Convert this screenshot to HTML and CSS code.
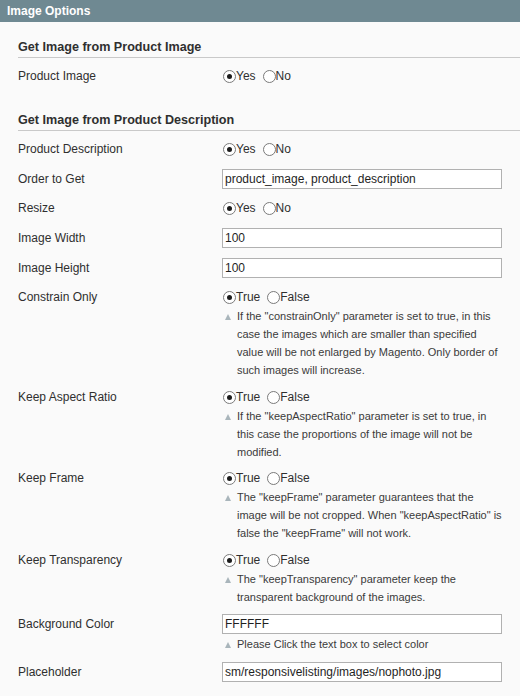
FILE: index.html
```html
<!DOCTYPE html>
<html>
<head>
<meta charset="utf-8">
<link rel="stylesheet" href="styles.css">
</head>
<body>
<div class="panel">
  <div class="panel-head">Image Options</div>
  <div class="panel-body">
    <h3 class="group-title first">Get Image from Product Image</h3>
    <div class="group">
      <div class="row">
        <div class="label">Product Image</div>
        <div class="value">
          <div class="radios">
            <label class="opt"><span class="radio checked"></span>Yes</label>
            <label class="opt"><span class="radio"></span>No</label>
          </div>
        </div>
      </div>
    </div>

    <h3 class="group-title">Get Image from Product Description</h3>
    <div class="group">
      <div class="row">
        <div class="label">Product Description</div>
        <div class="value">
          <div class="radios">
            <label class="opt"><span class="radio checked"></span>Yes</label>
            <label class="opt"><span class="radio"></span>No</label>
          </div>
        </div>
      </div>
      <div class="row input-row">
        <div class="label">Order to Get</div>
        <div class="value"><div class="text-input">product_image, product_description</div></div>
      </div>
      <div class="row">
        <div class="label">Resize</div>
        <div class="value">
          <div class="radios">
            <label class="opt"><span class="radio checked"></span>Yes</label>
            <label class="opt"><span class="radio"></span>No</label>
          </div>
        </div>
      </div>
      <div class="row input-row">
        <div class="label">Image Width</div>
        <div class="value"><div class="text-input">100</div></div>
      </div>
      <div class="row input-row">
        <div class="label">Image Height</div>
        <div class="value"><div class="text-input">100</div></div>
      </div>
      <div class="row has-note">
        <div class="label">Constrain Only</div>
        <div class="value">
          <div class="radios">
            <label class="opt"><span class="radio checked"></span>True</label>
            <label class="opt"><span class="radio"></span>False</label>
          </div>
          <p class="note">If the "constrainOnly" parameter is set to true, in this case the images which are smaller than specified value will be not enlarged by Magento. Only border of such images will increase.</p>
        </div>
      </div>
      <div class="row has-note">
        <div class="label">Keep Aspect Ratio</div>
        <div class="value">
          <div class="radios">
            <label class="opt"><span class="radio checked"></span>True</label>
            <label class="opt"><span class="radio"></span>False</label>
          </div>
          <p class="note">If the "keepAspectRatio" parameter is set to true, in this case the proportions of the image will not be modified.</p>
        </div>
      </div>
      <div class="row has-note">
        <div class="label">Keep Frame</div>
        <div class="value">
          <div class="radios">
            <label class="opt"><span class="radio checked"></span>True</label>
            <label class="opt"><span class="radio"></span>False</label>
          </div>
          <p class="note">The "keepFrame" parameter guarantees that the image will be not cropped. When "keepAspectRatio" is false the "keepFrame" will not work.</p>
        </div>
      </div>
      <div class="row has-note">
        <div class="label">Keep Transparency</div>
        <div class="value">
          <div class="radios">
            <label class="opt"><span class="radio checked"></span>True</label>
            <label class="opt"><span class="radio"></span>False</label>
          </div>
          <p class="note">The "keepTransparency" parameter keep the transparent background of the images.</p>
        </div>
      </div>
      <div class="row input-row has-note input-note">
        <div class="label">Background Color</div>
        <div class="value">
          <div class="text-input">FFFFFF</div>
          <p class="note">Please Click the text box to select color</p>
        </div>
      </div>
      <div class="row input-row">
        <div class="label">Placeholder</div>
        <div class="value"><div class="text-input">sm/responsivelisting/images/nophoto.jpg</div></div>
      </div>
    </div>
  </div>
</div>
</body>
</html>
```
FILE: styles.css
```css
html, body {
  margin: 0;
  padding: 0;
  background: #fafafa;
}
body {
  font-family: "Liberation Sans", Arial, sans-serif;
  font-size: 12px;
  color: #2f2f2f;
}
.panel-head {
  height: 22px;
  line-height: 22px;
  background: #6f8992;
  color: #ffffff;
  font-weight: bold;
  font-size: 12px;
  padding-left: 7px;
}
.panel-body {
  padding-left: 18px;
}
.group-title {
  margin: 20px 0 0 0;
  font-size: 12.6px;
  font-weight: bold;
  line-height: 18px;
  padding-bottom: 1px;
  border-bottom: 1px solid #c9c9c9;
  color: #2f2f2f;
}
.group-title.first {
  margin-top: 16px;
}
.group {
  padding-top: 4px;
}
.row {
  display: grid;
  grid-template-columns: 204px 280px;
  padding: 5px 0;
}
.row.has-note {
  padding-bottom: 3.5px;
}
.label {
  line-height: 19px;
}
.input-row .label {
  line-height: 20px;
}
.radios {
  display: flex;
  align-items: center;
  height: 19px;
  gap: 6px;
}
.opt {
  display: flex;
  align-items: center;
  line-height: 19px;
}
.radio {
  box-sizing: border-box;
  width: 13px;
  height: 13px;
  margin-left: 1px;
  border: 1px solid #7a7a7a;
  border-radius: 50%;
  background: #ffffff;
  display: flex;
  align-items: center;
  justify-content: center;
}
.radio.checked::after {
  content: "";
  width: 5px;
  height: 5px;
  border-radius: 50%;
  background: #1c1c1c;
}
.text-input {
  box-sizing: border-box;
  height: 20px;
  line-height: 18px;
  border: 1px solid #b1b1b1;
  background: #ffffff;
  padding: 0 2px;
  font-size: 12px;
  color: #1f1f1f;
}
.note {
  position: relative;
  margin: 0;
  padding-left: 15px;
  font-size: 11px;
  line-height: 18px;
  color: #3a3a3a;
}
.note::before {
  content: "";
  position: absolute;
  left: 3px;
  top: 7px;
  border-left: 3.5px solid transparent;
  border-right: 3.5px solid transparent;
  border-bottom: 6px solid #a9b5bb;
}
.input-note .note {
  margin-top: 1px;
}
.input-note {
  padding-bottom: 5px;
}
```
